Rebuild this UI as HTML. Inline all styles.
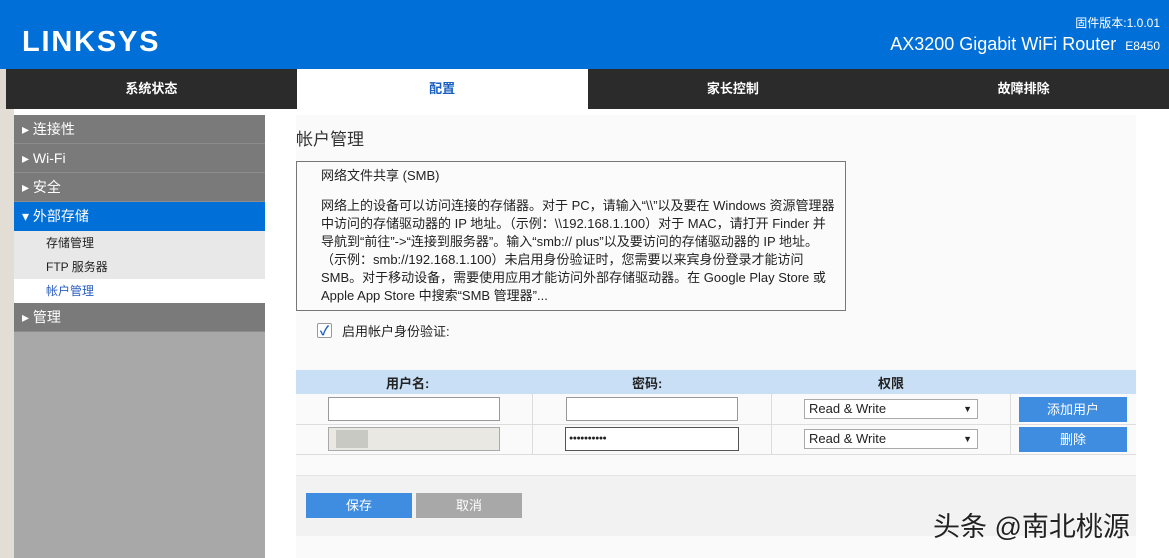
<!DOCTYPE html>
<html><head><meta charset="utf-8"><style>
*{margin:0;padding:0;box-sizing:border-box}
body{width:1169px;height:558px;overflow:hidden;background:#fff;font-family:"Liberation Sans","Noto Sans CJK SC",sans-serif;position:relative;font-size:13px;color:#222}
.abs{position:absolute}
#hdr{left:0;top:0;width:1169px;height:69px;background:#006fd8;color:#fff}
#nav{left:6px;top:69px;width:1163px;height:40px;background:#2b2b2b;display:flex}
#nav div{flex:1;text-align:center;line-height:40px;color:#fff;font-weight:bold;font-size:13px}
#nav div.on{background:#fff;color:#1a5fc0}
#lm{left:0;top:69px;width:6px;height:489px;background:#ddd9d0}
#lm2{left:0;top:109px;width:14px;height:449px;background:#e2ded6}
#sb{left:14px;top:115px;width:251px;height:443px;background:#a8a8a8}
.it{height:29px;line-height:29px;background:#7a7a7a;color:#fff;font-size:14px;padding-left:8px;border-bottom:1px solid #8c8c8c}
.it.on{background:#006fd8}
.sub{height:24px;line-height:24px;background:#e8e8e8;padding-left:32px;font-size:12px;color:#222}
.sub.on{background:#fff;color:#2a5cc0}
#main{left:296px;top:115px;width:840px;height:443px;background:#fafafa}
</style></head><body>
<div id="hdr" class="abs">
 <div class="abs" style="left:22px;top:26px;font-size:29px;font-weight:bold;letter-spacing:1.8px">LINKSYS</div>
 <div class="abs" style="right:9px;top:14px;font-size:12px">固件版本:1.0.01</div>
 <div class="abs" style="right:9px;top:34px;font-size:18px">AX3200 Gigabit WiFi Router <span style="font-size:12px;margin-left:4px">E8450</span></div>
</div>
<div id="lm" class="abs"></div><div id="lm2" class="abs"></div>
<div id="nav" class="abs"><div>系统状态</div><div class="on">配置</div><div>家长控制</div><div>故障排除</div></div>
<div id="sb" class="abs">
 <div class="it">▸ 连接性</div><div class="it">▸ Wi-Fi</div><div class="it">▸ 安全</div>
 <div class="it on" style="border:none">▾ 外部存储</div>
 <div class="sub">存储管理</div><div class="sub">FTP 服务器</div><div class="sub on">帐户管理</div>
 <div class="it">▸ 管理</div>
</div>
<div class="abs" style="left:265px;top:109px;width:904px;height:449px;background:#fff"></div>
<div id="main" class="abs"></div>
<div class="abs" style="left:296px;top:125px;font-size:17px;color:#333">帐户管理</div>
<div class="abs" style="left:296px;top:161px;width:550px;height:150px;border:1px solid #777;background:#fbfbfb;padding:5px 8px 0 24px;font-size:13px;line-height:18px;color:#222">
网络文件共享 (SMB)<div style="height:12px"></div>
网络上的设备可以访问连接的存储器。对于 PC，请输入“\\”以及要在 Windows 资源管理器中访问的存储驱动器的 IP 地址。（示例：\\192.168.1.100）对于 MAC，请打开 Finder 并导航到“前往”-&gt;“连接到服务器”。输入“smb:// plus”以及要访问的存储驱动器的 IP 地址。（示例：smb://192.168.1.100）未启用身份验证时，您需要以来宾身份登录才能访问 SMB。对于移动设备，需要使用应用才能访问外部存储驱动器。在 Google Play Store 或 Apple App Store 中搜索“SMB 管理器”...
</div>
<div class="abs" style="left:317px;top:323px;width:15px;height:15px;border:1px solid #999;border-radius:2px;background:#fff;color:#1a5fc0;font-size:13px;line-height:13px;text-align:center;font-weight:bold">✓</div>
<div class="abs" style="left:342px;top:321px;font-size:13px">启用帐户身份验证:</div>
<div class="abs" style="left:296px;top:370px;width:840px;height:24px;background:#c9dff5"></div>
<div class="abs" style="left:296px;top:394px;width:840px;height:61px;border-bottom:1px solid #ddd"></div>
<div class="abs" style="left:296px;top:424px;width:840px;height:1px;background:#ddd"></div>
<div class="abs" style="left:532px;top:394px;width:1px;height:61px;background:#ddd"></div>
<div class="abs" style="left:771px;top:394px;width:1px;height:61px;background:#ddd"></div>
<div class="abs" style="left:1010px;top:394px;width:1px;height:61px;background:#ddd"></div>
<div class="abs" style="left:386px;top:373px;font-weight:bold;font-size:13px">用户名:</div>
<div class="abs" style="left:632px;top:373px;font-weight:bold;font-size:13px">密码:</div>
<div class="abs" style="left:878px;top:373px;font-weight:bold;font-size:13px">权限</div>
<div class="abs" style="left:328px;top:397px;width:172px;height:24px;border:1px solid #999;background:#fff"></div>
<div class="abs" style="left:566px;top:397px;width:172px;height:24px;border:1px solid #999;background:#fff"></div>
<div class="abs" style="left:328px;top:427px;width:172px;height:24px;border:1px solid #aaa;background:#e9e8e3"></div>
<div class="abs" style="left:336px;top:430px;width:32px;height:18px;background:#c9c9c4"></div>
<div class="abs" style="left:565px;top:427px;width:174px;height:24px;border:1px solid #555;background:#fff;font-size:7px;letter-spacing:-0.5px;line-height:22px;padding-left:3px">●●●●●●●●●●</div>
<div class="abs" style="left:804px;top:399px;width:174px;height:20px;border:1px solid #aaa;background:#fff;font-size:13px;line-height:18px;padding-left:4px">Read &amp; Write<span style="position:absolute;right:5px;font-size:9px">▼</span></div>
<div class="abs" style="left:804px;top:429px;width:174px;height:20px;border:1px solid #aaa;background:#fff;font-size:13px;line-height:18px;padding-left:4px">Read &amp; Write<span style="position:absolute;right:5px;font-size:9px">▼</span></div>
<div class="abs" style="left:1019px;top:397px;width:108px;height:25px;background:#3e8de0;color:#fff;text-align:center;line-height:25px">添加用户</div>
<div class="abs" style="left:1019px;top:427px;width:108px;height:25px;background:#3e8de0;color:#fff;text-align:center;line-height:25px">删除</div>
<div class="abs" style="left:296px;top:475px;width:840px;height:61px;background:#f2f2f2;border-top:1px solid #e4e4e4"></div>
<div class="abs" style="left:306px;top:493px;width:106px;height:25px;background:#3e8de0;color:#fff;text-align:center;line-height:25px">保存</div>
<div class="abs" style="left:416px;top:493px;width:106px;height:25px;background:#a8a8a8;color:#fff;text-align:center;line-height:25px">取消</div>
<div class="abs" style="left:933px;top:505px;font-size:27px;color:#222;text-shadow:0 0 2px #fff">头条 @南北桃源</div>
</body></html>
